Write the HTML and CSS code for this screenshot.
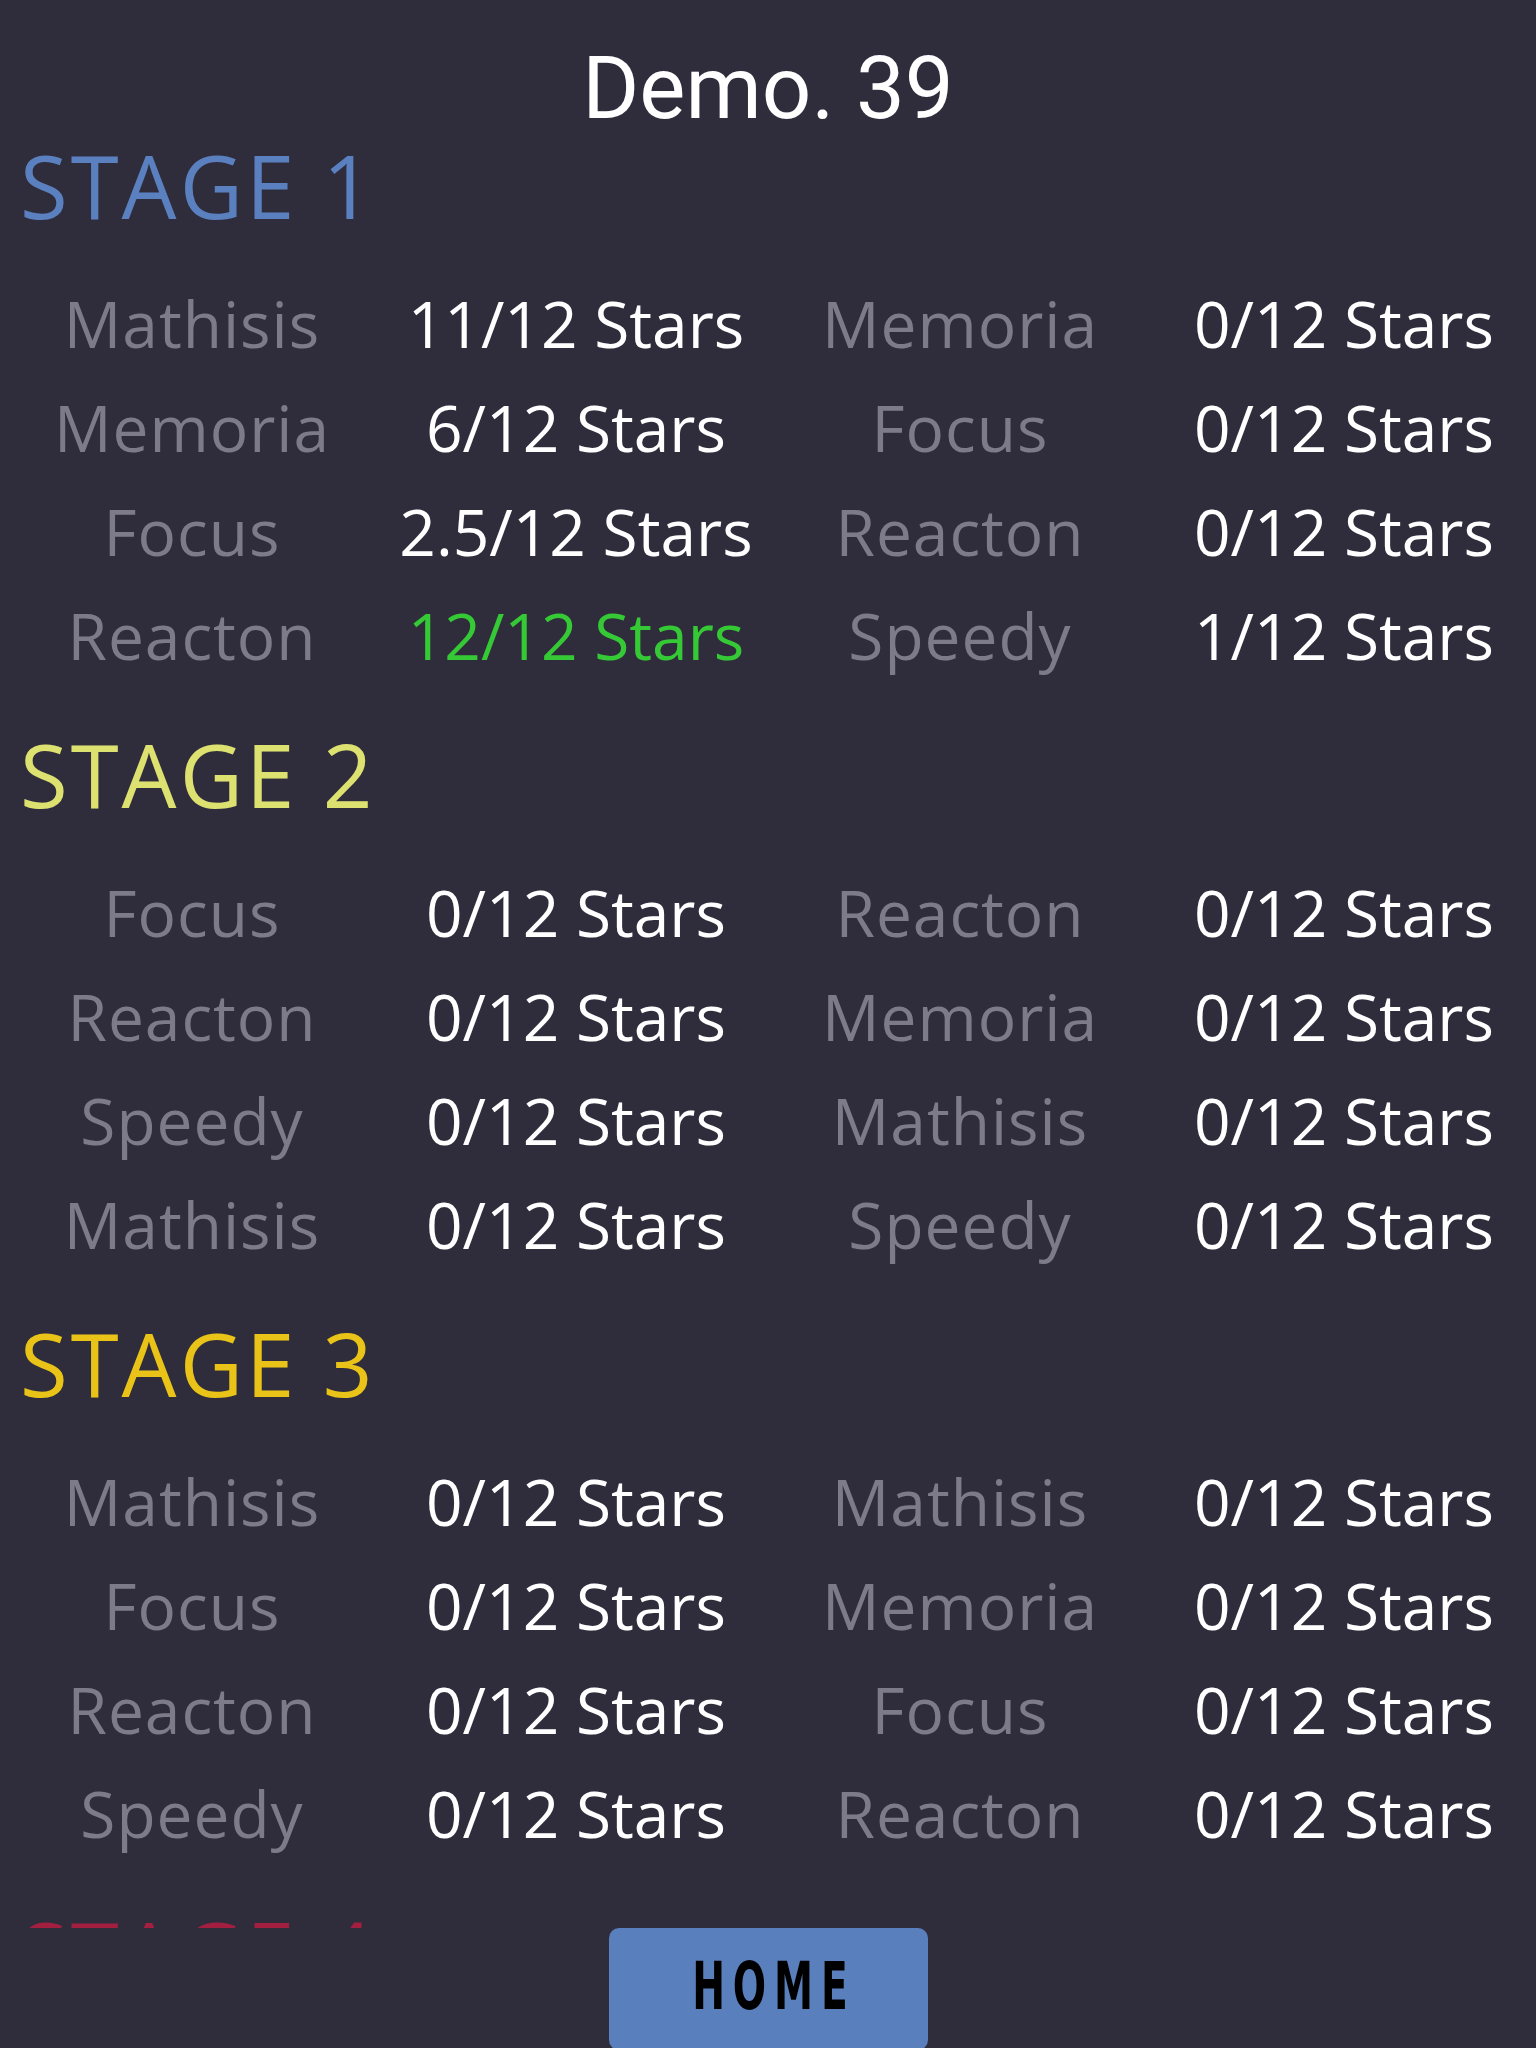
FILE: index.html
```html
<!DOCTYPE html>
<html lang="en">
<head>
    <meta charset="UTF-8">
    <meta name="viewport" content="width=device-width, initial-scale=1.0">
    <title>Demo. 39</title>
    <link rel="stylesheet" href="styles.css">
</head>
<body>
    <div id="scores">
        <h1 class="title">Demo. 39</h1>

        <div class="stage stage-1">
            <h2>STAGE 1</h2>
            <div class="grid">
                <span class="game">Mathisis</span><span class="stars">11/12 Stars</span>
                <span class="game">Memoria</span><span class="stars">0/12 Stars</span>
                <span class="game">Memoria</span><span class="stars">6/12 Stars</span>
                <span class="game">Focus</span><span class="stars">0/12 Stars</span>
                <span class="game">Focus</span><span class="stars">2.5/12 Stars</span>
                <span class="game">Reacton</span><span class="stars">0/12 Stars</span>
                <span class="game">Reacton</span><span class="stars full">12/12 Stars</span>
                <span class="game">Speedy</span><span class="stars">1/12 Stars</span>
            </div>
        </div>

        <div class="stage stage-2">
            <h2>STAGE 2</h2>
            <div class="grid">
                <span class="game">Focus</span><span class="stars">0/12 Stars</span>
                <span class="game">Reacton</span><span class="stars">0/12 Stars</span>
                <span class="game">Reacton</span><span class="stars">0/12 Stars</span>
                <span class="game">Memoria</span><span class="stars">0/12 Stars</span>
                <span class="game">Speedy</span><span class="stars">0/12 Stars</span>
                <span class="game">Mathisis</span><span class="stars">0/12 Stars</span>
                <span class="game">Mathisis</span><span class="stars">0/12 Stars</span>
                <span class="game">Speedy</span><span class="stars">0/12 Stars</span>
            </div>
        </div>

        <div class="stage stage-3">
            <h2>STAGE 3</h2>
            <div class="grid">
                <span class="game">Mathisis</span><span class="stars">0/12 Stars</span>
                <span class="game">Mathisis</span><span class="stars">0/12 Stars</span>
                <span class="game">Focus</span><span class="stars">0/12 Stars</span>
                <span class="game">Memoria</span><span class="stars">0/12 Stars</span>
                <span class="game">Reacton</span><span class="stars">0/12 Stars</span>
                <span class="game">Focus</span><span class="stars">0/12 Stars</span>
                <span class="game">Speedy</span><span class="stars">0/12 Stars</span>
                <span class="game">Reacton</span><span class="stars">0/12 Stars</span>
            </div>
        </div>

        <div class="stage stage-4">
            <h2>STAGE 4</h2>
        </div>
    </div>

    <div id="footer">
        <button class="home-btn"><span>HOME</span></button>
    </div>
</body>
</html>
```

FILE: styles.css
```css
body {
    margin: 0;
    width: 1536px;
    height: 2048px;
    overflow: hidden;
    background-color: #2f2d3c;
    font-family: "Open Sans", "Noto Sans", sans-serif;
}

#scores {
    height: 1928px;
    overflow: hidden;
}

.title {
    margin: 42px 0 0 0;
    font-family: Roboto, "Open Sans", sans-serif;
    font-size: 87px;
    font-weight: 400;
    line-height: 93px;
    color: #ffffff;
    text-align: center;
}

.stage {
    padding-bottom: 36px;
}

.stage h2 {
    margin: 0 0 37px 0;
    padding-left: 20px;
    font-size: 87px;
    font-weight: 400;
    line-height: 100px;
    letter-spacing: 3px;
}

.stage-1 h2 {
    color: #5b80bf;
}

.stage-2 h2 {
    color: #dde170;
}

.stage-3 h2 {
    color: #e9c318;
}

.stage-4 h2 {
    color: #a21f40;
}

.grid {
    display: grid;
    grid-template-columns: repeat(4, 1fr);
    grid-auto-rows: 104px;
    font-size: 64px;
    line-height: 104px;
    text-align: center;
}

.game {
    color: #7d7b89;
    letter-spacing: 1px;
}

.stars {
    color: #ffffff;
}

.stars.full {
    color: #35c935;
}

#footer {
    display: flex;
    justify-content: center;
    height: 120px;
}

.home-btn {
    width: 319px;
    height: 122px;
    padding: 0;
    border: none;
    border-radius: 10px;
    background-color: #5a7fbd;
    cursor: pointer;
}

.home-btn span {
    display: inline-block;
    margin-right: -12px;
    font-family: "Liberation Sans Narrow", "DejaVu Sans Condensed", sans-serif;
    font-size: 66px;
    font-weight: 700;
    letter-spacing: 12px;
    color: #000000;
    transform: scaleX(0.66);
    position: relative;
    top: -3px;
}
```
